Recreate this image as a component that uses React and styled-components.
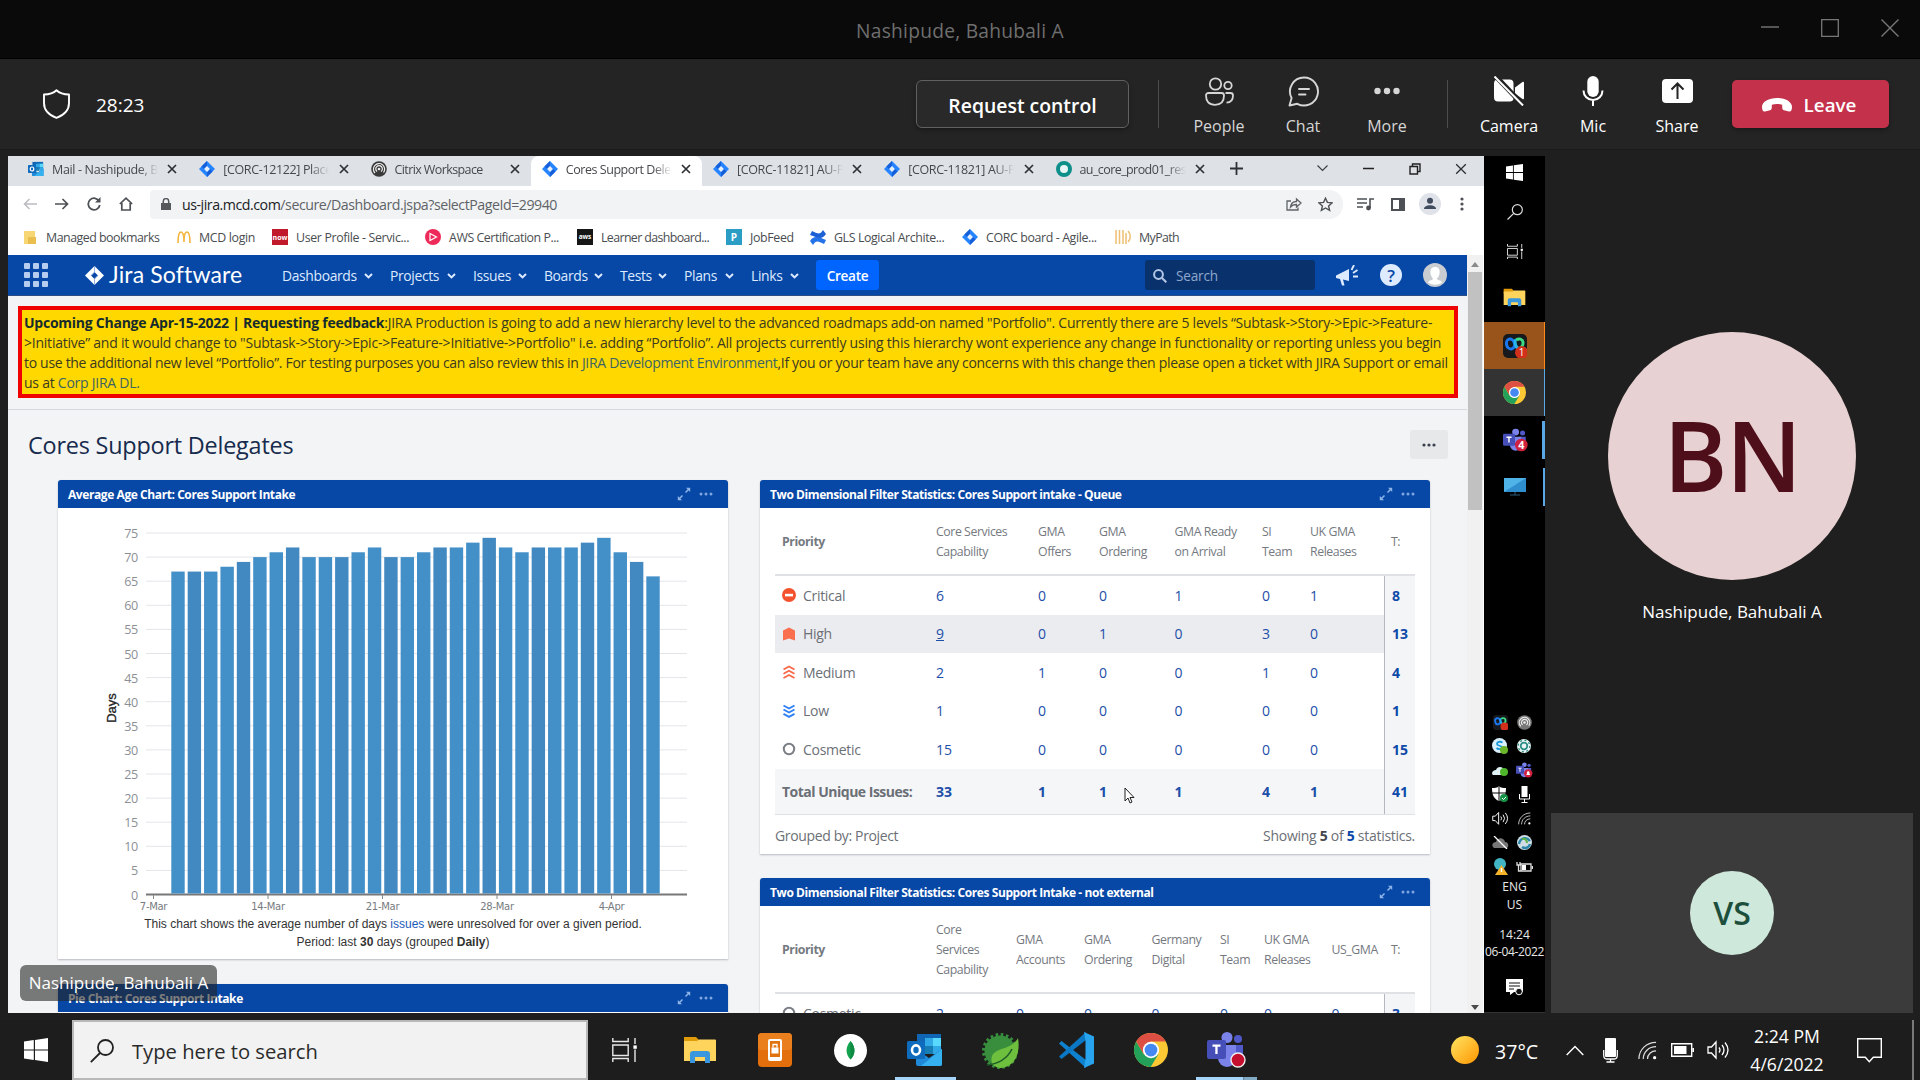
import React from "react";
import styled, { createGlobalStyle, css } from "styled-components";

const Global = createGlobalStyle`
  * { box-sizing: border-box; }
  html, body { margin: 0; padding: 0; background: #1f1f1f; }
  body { width: 1920px; height: 1080px; overflow: hidden; font-family: "Open Sans", "Noto Sans", sans-serif; }
  svg { display: block; flex: none; }
`;

const Screen = styled.div`
  width: 1920px; height: 1080px; display: flex; flex-direction: column; overflow: hidden; white-space: nowrap;
`;
const T = styled.span`
  display: block; white-space: nowrap;
  letter-spacing: ${(p) => p.$ls || 0}px;
`;

/* ---------- meeting title bar ---------- */
const TitleBar = styled.div`
  height: 59px; flex: none; background: #0a0a0a; border-bottom: 1px solid #000;
  display: grid; grid-template-columns: 1fr auto 1fr; align-items: center;
  color: #6f6f6f; font-size: 19.2px; padding: 2px 21px 0 21px;
`;
const WinControls = styled.div`
  display: flex; justify-content: flex-end; gap: 42px; padding-bottom: 4px;
`;
const MeetingBar = styled.div`
  height: 91px; flex: none; background: #242424; border-bottom: 1px solid #1b1b1b;
  display: flex; align-items: center; padding: 0 31px 1px 43px; color: #fff;
`;
const Timer = styled.div`
  font-size: 19px; margin-left: 26px; flex: 1; padding-top: 2px;
`;
const RequestButton = styled.div`
  width: 213px; height: 48px; border: 1px solid #616161; border-radius: 6px; background: #292929;
  display: flex; align-items: center; justify-content: center; font-size: 19.4px; font-weight: 600;
  box-shadow: 0 2px 4px rgba(0,0,0,.3); padding-top: 3px;
`;
const Divider = styled.div`
  width: 1px; height: 48px; background: #4d4d4d; margin: 0 ${(p) => p.$r}px 0 ${(p) => p.$l}px;
`;
const Action = styled.div`
  width: 84px; height: 64px; display: flex; flex-direction: column; align-items: center;
  color: ${(p) => (p.$bright ? "#fff" : "#d6d6d6")}; font-size: 16px; justify-content: space-between; line-height: 22px;
  margin-top: 3px;
`;
const IconBox = styled.div`
  height: 36px; display: flex; align-items: center; justify-content: center;
`;
const LeaveButton = styled.div`
  width: 157px; height: 48px; border-radius: 5px; background: #c4314b; display: flex; align-items: center;
  justify-content: center; gap: 12px; font-size: 18.8px; font-weight: 600; margin-left: 13px; box-shadow: 0 2px 4px rgba(0,0,0,.3);
  padding: 3px 3px 0 0;
`;

/* ---------- stage ---------- */
const Stage = styled.div`
  position: relative; height: 870px; flex: none; background: #1f1f1f; padding: 6px 0 7px 8px; display: flex;
`;
const Shared = styled.div`
  width: 1537px; height: 857px; display: flex; overflow: hidden; flex: none;
`;
const Browser = styled.div`
  width: 1476px; height: 857px; background: #fff; display: flex; flex-direction: column; overflow: hidden; color: #3c4043; flex: none;
`;
const TabStrip = styled.div`
  height: 30px; flex: none; background: #dee1e6; display: flex; padding-left: 9px; color: #45494d; font-size: 12.5px;
`;
const Tab = styled.div`
  width: 171.25px; height: 30px; flex: none; display: flex; align-items: center; padding: 0 11px 4px 11px;
  ${(p) => p.$active && css`background: #fff; border-radius: 8px 8px 0 0;`}
  ${(p) => p.$line && css`background: linear-gradient(#909398,#909398) 100% 8px / 1px 17px no-repeat;`}
`;
const TabLabel = styled.div`
  width: 106px; margin-left: 8px; overflow: hidden; flex: none; letter-spacing: ${(p) => p.$ls}px;
  -webkit-mask-image: linear-gradient(90deg, #000 82%, transparent 100%);
`;
const TabTools = styled.div`
  flex: 1; display: flex; align-items: center; padding: 0 17px 5px 14px;
`;
const Spacer = styled.div`
  flex: ${(p) => (p.$w ? "none" : 1)}; width: ${(p) => p.$w || 0}px;
`;
const UrlRow = styled.div`
  height: 33px; flex: none; display: flex; align-items: center; padding: 3px 0 0 6px;
`;
const NavIcon = styled.div`
  width: 32px; display: flex; justify-content: center; color: ${(p) => p.$c || "#4d5156"};
`;
const UrlBox = styled.div`
  width: 1193px; height: 29px; background: #f1f3f4; border-radius: 4px 14px 14px 4px; display: flex; align-items: center;
  font-size: 14.2px; color: #5f6368; padding: 0 10px 0 11px; margin-left: 8px;
  b { font-weight: 400; color: #202124; }
`;
const Bookmarks = styled.div`
  height: 36px; flex: none; display: flex; align-items: center; padding-left: 16px; font-size: 12.4px; color: #4a4d51;
`;
const Bookmark = styled.div`
  width: ${(p) => p.$w}px; flex: none; display: flex; align-items: center; gap: ${(p) => p.$g || 8}px;
`;
const Square = styled.div`
  width: 16px; height: 16px; background: ${(p) => p.$bg}; color: #fff; font-weight: 700; font-size: ${(p) => p.$fs}px;
  display: flex; align-items: center; justify-content: center; line-height: 1; flex: none;
`;

const PageWrap = styled.div`
  flex: 1; display: flex; min-height: 0;
`;
const Page = styled.div`
  width: 1459px; flex: none; background: #f3f4f6; overflow: hidden; display: flex; flex-direction: column;
`;
const ScrollTrack = styled.div`
  width: 17px; background: #f1f1f1; border-right: 1px solid #fff; display: flex; flex-direction: column; align-items: center;
  justify-content: space-between; padding: 7px 0 3px;
`;
const ScrollThumb = styled.div`
  width: 14px; height: 238px; background: #c1c1c1; margin-top: 5px; margin-bottom: auto;
`;
const JiraHeader = styled.div`
  height: 41px; flex: none; background: #0747a6; border-bottom: 1px solid #2a4f86; display: flex; align-items: center; padding-left: 16px; color: #deebff;
  font-size: 13.9px;
`;
const Grid9 = styled.div`
  display: grid; grid-template-columns: repeat(3, 6.4px); gap: 2.6px; width: 61px;
  i { height: 6.4px; background: #b7cdf0; border-radius: 1px; }
`;
const JiraName = styled.div`
  font-family: Lato, sans-serif; font-size: 23px; color: #fff; width: 173px; margin-left: 5px; padding-bottom: 2px; letter-spacing: .15px;
`;
const NavItem = styled.div`
  width: ${(p) => p.$w}px; flex: none; display: flex; align-items: center; letter-spacing: -.36px;
  justify-content: space-between; padding: 1px 17px 0 0;
`;
const CreateButton = styled.div`
  width: 63px; height: 30px; background: #0065ff; border-radius: 3px; color: #fff; font-weight: 600; font-size: 13.6px;
  display: flex; align-items: center; justify-content: center; letter-spacing: -.3px; padding-top: 1px;
`;
const SearchField = styled.div`
  width: 170px; height: 30px; background: #09326c; border-radius: 3px; margin-left: 266px; display: flex; align-items: center;
  gap: 9px; padding: 1px 0 0 8px; color: #8fa7cc; font-size: 13.6px;
`;
const BannerArea = styled.div`
  height: 114px; flex: none; border-bottom: 1px solid #d5d9de; padding: 10px 9px 0 10px;
`;
const Banner = styled.div`
  height: 92px; border: 4px solid #ee0202; background: #ffd800; padding: 3px 0 0 2px; color: #3c3a20; font-size: 14px; line-height: 20px;
  b { color: #172b2d; } a { color: #3c6464; }
`;
const TitleRow = styled.div`
  height: 70px; flex: none; display: flex; align-items: center; justify-content: space-between; padding: 0 19px 1px 20px;
  color: #172b4d; font-size: 23.4px;
`;
const MoreButton = styled.div`
  width: 38px; height: 29px; background: #e6e8ea; border-radius: 3px; display: flex; align-items: center; justify-content: center;
`;
const Columns = styled.div`
  display: grid; grid-template-columns: 670px 670px; gap: 32px; padding-left: 50px;
`;
const Column = styled.div`
  display: flex; flex-direction: column; gap: ${(p) => p.$gap}px;
`;
const Card = styled.div`
  background: #fff; height: ${(p) => p.$h}px; flex: none; box-shadow: 0 1px 2px rgba(30,40,60,.28); border-radius: 3px 3px 0 0;
`;
const CardHead = styled.div`
  height: 28px; background: #0747a6; border-radius: 3px 3px 0 0; color: #fff; font-weight: 700; font-size: 12px;
  display: flex; align-items: center; padding: 0 15px 0 10px; gap: 8px;
`;
const Caption = styled.div`
  font-family: "Liberation Sans", Arial, sans-serif; font-size: 12px; line-height: 18px; text-align: center; color: #333;
  display: flex; flex-direction: column; align-items: center; padding-top: 2px;
  a { color: #1b5bb8; }
`;
const Table = styled.div`
  padding: 0 15px; color: #6b6f76; font-size: 14px;
`;
const HeadRow = styled.div`
  display: grid; grid-template-columns: ${(p) => p.$cols}; height: ${(p) => p.$h}px; align-items: center; padding-top: 2px;
  border-bottom: 2px solid #dfe1e5; font-size: 12.3px; line-height: 20px; color: #75797f; white-space: pre;
  > * { padding-left: 7px; letter-spacing: -.43px; }
`;
const Row = styled.div`
  display: grid; grid-template-columns: ${(p) => p.$cols}; height: ${(p) => p.$h || 38.5}px; align-items: center;
  background: ${(p) => p.$bg || "#fff"}; color: #1d4fa8; font-weight: ${(p) => (p.$bold ? 700 : 400)};
  border-bottom: ${(p) => (p.$rule ? "1px solid #dfe1e5" : "none")};
  > * { padding-left: 7px; }
`;
const Label = styled.div`
  display: flex; align-items: center; gap: 7px; color: #6b6f76; letter-spacing: -.3px;
`;
const TotalCell = styled.div`
  align-self: stretch; display: flex; align-items: center; border-left: 1px solid #b4b8be; background: #f4f5f7; font-weight: 700;
  color: #0f4aa8;
`;
const Foot = styled.div`
  height: 40px; display: flex; align-items: center; justify-content: space-between; letter-spacing: -.36px;
  b { color: #43474d; } a { color: #0747a6; font-weight: 700; }
`;

/* ---------- remote taskbar ---------- */
const RemoteBar = styled.div`
  width: 61px; background: #000; color: #e8e8e8; font-size: 12px; display: flex; flex-direction: column; align-items: center;
  border-bottom: 1px solid #333;
`;
const RemoteCell = styled.div`
  width: 61px; height: ${(p) => p.$h}px; flex: none; display: flex; align-items: center; justify-content: center;
  background: ${(p) => p.$bg || "none"}; border-right: ${(p) => p.$bw || 0}px solid ${(p) => p.$bc || "#5aa9e6"};
  margin-top: ${(p) => p.$mt || 0}px; padding-left: ${(p) => p.$bw || 0}px;
`;
const TrayGrid = styled.div`
  display: grid; grid-template-columns: 24px 24px; grid-auto-rows: 24.1px; place-items: center; margin-top: 204px; margin-left: -5px;
`;
const Line = styled.div`
  height: 17px; line-height: 17px; margin-top: ${(p) => p.$mt || 0}px; letter-spacing: ${(p) => p.$ls || 0}px; font-size: 12px;
`;

/* ---------- participants ---------- */
const People = styled.div`
  margin-left: 6px; width: 362px; height: 857px; display: flex; flex-direction: column; color: #fff;
`;
const TileTop = styled.div`
  height: 657px; display: flex; flex-direction: column; align-items: center; padding-top: 176px; font-size: 17px; gap: 20px;
`;
const TileBottom = styled.div`
  height: 200px; background: #3b3b3b; display: flex; align-items: center; justify-content: center;
`;
const Avatar = styled.div`
  width: ${(p) => p.$d}px; height: ${(p) => p.$d}px; border-radius: 50%; background: ${(p) => p.$bg}; color: ${(p) => p.$c};
  font-size: ${(p) => p.$fs}px; font-weight: 600; display: flex; align-items: center; justify-content: center; flex: none;
  line-height: 1; letter-spacing: ${(p) => p.$ls || 0}px; padding-bottom: ${(p) => p.$pb || 0}px;
`;
const NameTag = styled.div`
  position: absolute; left: 20px; top: 815px; width: 197px; height: 36px; border-radius: 6px; background: rgba(36,36,36,.6);
  color: #fff; font-size: 17px; display: flex; align-items: center; justify-content: center; padding-bottom: 2px;
`;
const Cursor = styled.div`
  position: absolute; left: 1124px; top: 637px;
`;

/* ---------- taskbar ---------- */
const Taskbar = styled.div`
  height: 60px; flex: none; background: #1d1d1d; display: flex; align-items: center; color: #fff;
`;
const StartCell = styled.div`
  width: 72px; display: flex; justify-content: center;
`;
const SearchBox = styled.div`
  width: 516px; height: 60px; background: #f2f2f2; border: 2px solid #b9b9b9; display: flex; align-items: center; gap: 18px;
  padding: 1px 0 0 16px; color: #2b2b2b; font-size: 20.2px; margin-right: -1px; flex: none;
`;
const SearchHint = styled.div`
  padding-top: 1px;
`;
const TaskCell = styled.div`
  width: 75.2px; height: 60px; display: flex; align-items: center; justify-content: center; flex: none;
`;
const TaskStack = styled.div`
  width: 75.2px; height: 60px; flex: none; display: grid; grid-template-rows: 57px 3px; justify-items: center; align-items: center;
  > svg { margin-top: 3px; }
`;
const Underline = styled.div`
  width: 61px; height: 3px; background: ${(p) => (p.$split ? "linear-gradient(90deg,#a5d5f8 77%,#5c7a90 77%,#83aac5 80%)" : "#a5d5f8")};
`;
const Temp = styled.div`
  width: 87px; padding: 3px 0 0 16px; font-size: 19.6px;
`;
const Clock = styled.div`
  width: 80px; text-align: center; font-size: 17.6px; line-height: 28px; display: flex; flex-direction: column; align-items: center;
`;
const ShowDesktop = styled.div`
  width: 2px; height: 60px; background: #7a7a7a; margin-left: 30px;
`;

/* ---------- icons ---------- */
const JiraMark = ({ s = 16, white }) => (
  <svg width={s} height={s} viewBox="0 0 20 20">
    <path d="M10 0 20 10 10 20 0 10Z" fill={white ? "#fff" : "#2684ff"} />
    {!white && <path d="M10 0v6L6.3 10 3 7Z M10 20v-6l3.7-4 3.3 3Z" fill="#1560d8" />}
    <path d="M10 6.4 13.6 10 10 13.6 6.4 10Z" fill={white ? "#0747a6" : "#e8f0fb"} />
    {white && <path d="M10 0v6.4L6.4 10M10 20v-6.4l3.6-3.6" stroke="#8fb0e0" strokeWidth="1" fill="none" />}
  </svg>
);
const Outlook = ({ s = 36 }) => (
  <svg width={s} height={s} viewBox="0 0 36 36">
    <path d="M10 2h24v16H10z" fill="#1066b5" />
    <path d="M18 6h8v8h-8z" fill="#32a9e7" /><path d="M26 6h8v8h-8z" fill="#58d9fd" />
    <path d="M18 14h8v8h-8z" fill="#167eb4" /><path d="M26 14h8v8h-8z" fill="#32a9e7" />
    <path d="M9 17l13 9 13-9v15a2 2 0 0 1-2 2H11a2 2 0 0 1-2-2z" fill="#1e8ad8" />
    <path d="M35 17 14 34h19a2 2 0 0 0 2-2z" fill="#35b1ef" />
    <rect x="0" y="9" width="18" height="18" rx="1.5" fill="#0f6cbd" />
    <ellipse cx="9" cy="18" rx="4" ry="4.6" fill="none" stroke="#fff" strokeWidth="2.6" />
  </svg>
);
const Chrome = ({ s = 34 }) => (
  <svg width={s} height={s} viewBox="0 0 48 48">
    <circle cx="24" cy="24" r="24" fill="#fcc934" />
    <path d="M3.2 12 13.800 30 34.400 30 23.600 48A24 24 0 0 1 3.200 12Z" fill="#23a15b" />
    <path d="M3.2 12A24 24 0 0 1 44.8 12H24L13.8 19v11Z" fill="#de4f43" />
    <circle cx="24" cy="24" r="11.5" fill="#fff" /><circle cx="24" cy="24" r="9" fill="#4688f1" />
  </svg>
);
const Teams = ({ s = 38, badge }) => (
  <svg width={s} height={s} viewBox="0 0 38 38" overflow="visible">
    <circle cx="20" cy="6.5" r="5.5" fill="#7b83eb" /><circle cx="31" cy="8" r="4" fill="#5059c9" />
    <path d="M25 14h11v11a6 6 0 0 1-11 3z" fill="#5059c9" />
    <path d="M11 14h18v13a9 9 0 0 1-18 0z" fill="#7b83eb" />
    <rect x="0" y="9" width="19" height="19" rx="2" fill="#464eb8" />
    <path d="M5.5 13.5h8v2.2H10.6V23H8.3v-7.3H5.5z" fill="#fff" />
    {badge === "dot" && <circle cx="31" cy="29" r="7" fill="#c50f2f" stroke="#f0f0f0" strokeWidth="1.4" />}
    {badge && badge !== "dot" && <circle cx="29" cy="27" r="10" fill="#d0213f" />}
    {badge && badge !== "dot" && badge !== "bell" && (
      <text x="29" y="33" fontSize="17" fontWeight="700" fill="#fff" textAnchor="middle">{badge}</text>
    )}
    {badge === "bell" && <path d="M24 31h10l-2-3v-3a3 3 0 0 0-6 0v3z" fill="#fff" />}
  </svg>
);
const Folder = ({ s = 34 }) => (
  <svg width={s} height={s * 0.8} viewBox="0 0 34 27">
    <path d="M1 1h12l3 3v4H1z" fill="#e09b0a" />
    <path d="M1 5h13l2-1.5h16a1 1 0 0 1 1 1V25H1z" fill="#ffd45c" />
    <path d="M7 27v-9a3 3 0 0 1 3-3h14a3 3 0 0 1 3 3v9h-5v-6h-10v6z" fill="#3a96dd" />
  </svg>
);
const WinLogo = ({ s = 24 }) => (
  <svg width={s} height={s} viewBox="0 0 24 24" fill="#fff">
    <path d="M0 3.4 9.8 2v9.4H0zM11 1.9 24 0v11.4H11zM0 12.6h9.8V22L0 20.6zM11 12.6h13V24l-13-1.9z" />
  </svg>
);
const Magnifier = ({ s = 24, c = "#222", w = 1.8 }) => (
  <svg width={s} height={s} viewBox="0 0 24 24" fill="none" stroke={c} strokeWidth={w}>
    <circle cx="15.5" cy="8.5" r="7.5" /><path d="M10 14 .8 23.2" />
  </svg>
);
const TaskView = ({ s = 25 }) => (
  <svg width={s} height={s * 0.96} viewBox="0 0 25 24" fill="none" stroke="#e8e8e8" strokeWidth="1.4">
    <path d="M.8 0v3.5h15.4V0M.8 7h15.4v10.5H.8zM.8 24v-3.5h15.4V24M23 0v6M23 11.5V24" />
    <path d="M21.4 7.4h3.4v3.4h-3.4z" fill="#fff" stroke="none" />
  </svg>
);
const Close = ({ s = 10, c = "#2d3034", w = 1.7 }) => (
  <svg width={s} height={s} viewBox="0 0 10 10" stroke={c} strokeWidth={w}><path d="M1 1l8 8M9 1 1 9" /></svg>
);
const Chev = () => (
  <svg width="9" height="6" viewBox="0 0 9 6" fill="none" stroke="#deebff" strokeWidth="2"><path d="M1 1l3.5 3.4L8 1" /></svg>
);
const Dots = ({ c = "#7fa6e0", r = 1.5 }) => (
  <svg width="14" height="4" viewBox="0 0 14 4" fill={c}><circle cx="2" cy="2" r={r} /><circle cx="7" cy="2" r={r} /><circle cx="12" cy="2" r={r} /></svg>
);
const Expand = () => (
  <svg width="14" height="14" viewBox="0 0 14 14" stroke="#8db4e8" strokeWidth="1.5" fill="#8db4e8">
    <path d="M8.5 5.5 12 2M5.5 8.5 2 12" /><path d="M9 .8h4.2V5zM.8 9v4.2H5z" stroke="none" />
  </svg>
);
const Wifi = ({ s = 20 }) => (
  <svg width={s} height={s} viewBox="0 0 20 20" fill="none" stroke="#ddd" strokeWidth="1.3">
    <path d="M1 19C1 9 9 1.5 19 1.5M5.5 19C5.5 11.500 11.500 6 19 6M10 19c0-5 4-8.500 9-8.500" /><circle cx="17.500" cy="17.500" r="1.700" fill="#fff" stroke="none" />
  </svg>
);
const Speaker = ({ s = 23 }) => (
  <svg width={s} height={s * 0.87} viewBox="0 0 23 20" fill="none" stroke="#fff" strokeWidth="1.3">
    <path d="M1 7h3.500L9 2v16l-4.500-5H1zM12 7.500q2 2.500 0 5M15 5q4 5 0 10M18 2.500q6 7.500 0 15" />
  </svg>
);
const Citrix = ({ s = 16, c = "#3a3a3a" }) => (
  <svg width={s} height={s} viewBox="0 0 16 16" fill="none">
    <circle cx="8" cy="8" r="7.800" fill={c} />
    <path d="M4 12A5.600 5.600 0 1 1 12.500 11.500M6 10.500A3.300 3.300 0 1 1 10 10.600" stroke="#eee" strokeWidth="1.200" />
    <circle cx="8" cy="8" r="1.300" fill="#eee" />
  </svg>
);
const Webex = ({ s = 24, badge }) => (
  <svg width={s} height={s} viewBox="0 0 24 24">
    <rect width="24" height="24" rx="5" fill="#17191c" />
    <path d="M13 6c3-2 6.500-1 7 2 .3 3-1 5-3 5.500" stroke="#3ddc84" strokeWidth="3" fill="none" />
    <ellipse cx="7.500" cy="10" rx="4" ry="5" transform="rotate(-15 7.500 10)" fill="none" stroke="#1b78f0" strokeWidth="3" />
    <path d="M12 6.500c0 5 1.500 8 4.500 8" stroke="#27b8ea" strokeWidth="3" fill="none" strokeLinecap="round" />
    <circle cx="18.500" cy="18.500" r="6.500" fill="#d3301c" />
    {badge && <text x="18.500" y="22" fontSize="10" fill="#fff" textAnchor="middle">{badge}</text>}
  </svg>
);

/* ---------- data ---------- */
const bars = [67, 67, 67, 68, 69, 70, 71, 72, 70, 70, 70, 71, 72, 70, 70, 71, 72, 72, 73, 74, 72, 71, 72, 72, 72, 73, 74, 71, 69, 66];
const ticks = Array.from({ length: 16 }, (_, i) => i * 5);
const dates = ["7-Mar", "14-Mar", "21-Mar", "28-Mar", "4-Apr"];
const yOf = (v) => 386.5 - v * 4.82;

const cols1 = "154px 102px 61px 75.500px 87.500px 48px 1fr 31px";
const cols2 = "154px 80px 68px 67.500px 68.500px 44px 67.500px 1fr 31px";
const rows1 = [
  ["Critical", [6, 0, 0, 1, 0, 1], 8],
  ["High", [9, 0, 1, 0, 3, 0], 13],
  ["Medium", [2, 1, 0, 0, 1, 0], 4],
  ["Low", [1, 0, 0, 0, 0, 0], 1],
  ["Cosmetic", [15, 0, 0, 0, 0, 0], 15],
];

const PriorityIcon = ({ name }) => (
  <svg width="14" height="14" viewBox="0 0 14 14" fill="none">
    {name === "Critical" && (<><circle cx="7" cy="7" r="7" fill="#f4522e" /><path d="M3 5.800h8v2.600H3z" fill="#fff" /></>)}
    {name === "High" && <path d="M1 3.500 7 .5l6 3V13.500L7 11.500l-6 2z" fill="#fa6f4d" />}
    {name === "Medium" && <path d="M1.500 4.500 7 1.500l5.500 3M1.500 8.700 7 5.700l5.500 3M1.500 13 7 10l5.500 3" stroke="#f8694a" strokeWidth="1.800" />}
    {name === "Low" && <path d="M1.500 1.500 7 4.500l5.500-3M1.500 5.500 7 8.500l5.500-3M1.500 9.800 7 12.800l5.500-3" stroke="#2f80f5" strokeWidth="1.900" />}
    {name === "Cosmetic" && <circle cx="7" cy="7" r="5.200" stroke="#7a7e85" strokeWidth="2" />}
  </svg>
);

const Head = ({ children }) => (
  <CardHead><T $ls={-0.42}>{children}</T><Spacer /><Expand /><Dots /></CardHead>
);

function Chart() {
  return (
    <svg width="670" height="405" viewBox="0 0 670 405">
      {ticks.map((t) => (
        <g key={t}>
          <path d={`M88 ${yOf(t)}H629`} stroke={t ? "#e3e5e9" : "#777"} strokeWidth={t ? 1 : 2} />
          <text x="80" y={yOf(t) + 5} fontSize="12.600" letterSpacing="-.3" textAnchor="end" fill="#8c9096">{t}</text>
        </g>
      ))}
      {bars.map((v, i) => (
        <rect key={i} x={113.3 + i * 16.38} y={yOf(v)} width="13.400" height={v * 4.82 - 1} fill={i % 3 === 1 ? "#4389c1" : "#438fc8"} />
      ))}
      {dates.map((d, i) => (
        <g key={d}>
          <path d={`M${95.500 + i * 114.500} 387v4`} stroke="#888" />
          <text x={95.500 + i * 114.500} y="402" fontSize="10" textAnchor="middle" fontFamily="DejaVu Sans" letterSpacing="-.3" fill="#777b80">{d}</text>
        </g>
      ))}
      <text transform="translate(57.500 200) rotate(-90)" textAnchor="middle" fontSize="13" fontFamily="Liberation Sans" fill="#222" stroke="#222" strokeWidth=".3">Days</text>
    </svg>
  );
}

function BrowserWindow() {
  const tabs = [
    [<Outlook s={16} />, "Mail - Nashipude, B", 1, 0, -0.35],
    [<JiraMark />, "[CORC-12122] Place", 1, 0, -0.36],
    [<Citrix />, "Citrix Workspace", 0, 0, -0.6],
    [<JiraMark />, "Cores Support Dele", 0, 1, -0.45],
    [<JiraMark />, "[CORC-11821] AU-P", 1, 0, -0.36],
    [<JiraMark />, "[CORC-11821] AU-P", 1, 0, -0.36],
    [<svg width="16" height="16"><circle cx="8" cy="8" r="6" fill="#e8f6f5" stroke="#0f8f8a" strokeWidth="4" /></svg>, "au_core_prod01_res", 1, 0, -0.58],
  ];
  const nav = [["Dashboards", 108], ["Projects", 83], ["Issues", 71], ["Boards", 76], ["Tests", 64], ["Plans", 67], ["Links", 65]];
  return (
    <Browser>
      <TabStrip>
        {tabs.map(([icon, label, line, active, ls], i) => (
          <Tab key={i} $line={line} $active={active}>
            {icon}<TabLabel $ls={ls}>{label}</TabLabel><Spacer /><Close />
          </Tab>
        ))}
        <TabTools>
          <svg width="13" height="13" stroke="#2d3034" strokeWidth="1.800"><path d="M6.500 0v13M0 6.500h13" /></svg>
          <Spacer />
          <svg width="11" height="7" fill="none" stroke="#3c4043" strokeWidth="1.200"><path d="M.5.5l5 5 5-5" /></svg><Spacer $w={35} />
          <svg width="11" height="3"><path d="M0 1.500h11" stroke="#222" strokeWidth="1.500" /></svg><Spacer $w={35} />
          <svg width="12" height="12" fill="none" stroke="#222" strokeWidth="1.400"><path d="M1 3.500h7.500V11H1zM3.500 3.500V1H11v7.500H8.500" /></svg><Spacer $w={34} />
          <Close s={12} w={1.1} />
        </TabTools>
      </TabStrip>
      <UrlRow>
        <NavIcon $c="#b9bcc0"><svg width="14" height="12" fill="none" stroke="currentColor" strokeWidth="1.500"><path d="M14 6H1.500M6.500 1 1.500 6l5 5" /></svg></NavIcon>
        <NavIcon><svg width="14" height="12" fill="none" stroke="currentColor" strokeWidth="1.700"><path d="M0 6h12.500M7.500 1l5 5-5 5" /></svg></NavIcon>
        <NavIcon><svg width="14" height="14" fill="none" stroke="currentColor" strokeWidth="1.800"><path d="M12.300 4.500A5.800 5.800 0 1 0 12.800 8" /><path d="M13.500 0v5.500H8z" fill="currentColor" stroke="none" /></svg></NavIcon>
        <NavIcon><svg width="14" height="14" fill="none" stroke="currentColor" strokeWidth="1.700"><path d="M.8 7 7 1.200 13.200 7M2.800 6v7h8.400V6" /></svg></NavIcon>
        <UrlBox>
          <svg width="10" height="12" fill="#55595e"><path d="M0 5h10v7H0z" /><path d="M2.300 5V3.300a2.700 2.700 0 0 1 5.400 0V5" fill="none" stroke="#55595e" strokeWidth="1.500" /></svg>
          <Spacer $w={11} />
          <T $ls={-0.47}><b>us-jira.mcd.com</b>/secure/Dashboard.jspa?selectPageId=29940</T>
          <Spacer />
          <svg width="16" height="14" fill="none" stroke="#5f6368" strokeWidth="1.300"><path d="M5 4H1v9h11v-2.500M4.500 10c.5-4 3-5.500 6-5.500V2l4.500 4-4.500 4V7.500c-2.500 0-4.500.5-6 2.500z" /></svg>
          <Spacer $w={16} />
          <svg width="15" height="15" viewBox="0 0 15 15" fill="none" stroke="#4d5156" strokeWidth="1.400"><path d="M7.500 1.200l1.900 4.200 4.600.5-3.400 3 1 4.500-4.100-2.400-4.100 2.400 1-4.500-3.400-3 4.600-.5z" /></svg>
        </UrlBox>
        <Spacer $w={14} />
        <svg width="17" height="14" fill="none" stroke="#4d5156" strokeWidth="1.600"><path d="M0 2h10M0 6h10M0 10h6M13 11V2h4" /><circle cx="11.500" cy="11" r="1.600" fill="#4d5156" /></svg>
        <Spacer $w={17} />
        <svg width="14" height="13" fill="none" stroke="#4d5156" strokeWidth="2"><path d="M1 1h12v11H1z" /><path d="M9 1h4v11H9z" fill="#4d5156" /></svg>
        <Spacer $w={14} />
        <svg width="22" height="22"><circle cx="11" cy="11" r="11" fill="#dfe2e8" /><circle cx="11" cy="7.800" r="3" fill="#414b5e" /><path d="M5 16c0-5 12-5 12 0z" fill="#414b5e" /></svg>
        <Spacer $w={19} />
        <svg width="4" height="14" fill="#4d5156"><circle cx="2" cy="2" r="1.600" /><circle cx="2" cy="7" r="1.600" /><circle cx="2" cy="12" r="1.600" /></svg>
      </UrlRow>
      <Bookmarks>
        <Bookmark $w={153} $g={9}><svg width="13" height="15"><path d="M0 1h11v13H0z" fill="#f7d774" /><path d="M4 7h8v7H4z" fill="#e9bd4e" /></svg><T $ls={-0.5}>Managed bookmarks</T></Bookmark>
        <Bookmark $w={95} $g={8}><svg width="14" height="12" fill="none" stroke="#f3b53c" strokeWidth="1.600"><path d="M1 12C1 5 2 1 4 1s3 4 3 10c0-6 1-10 3-10s3 4 3 11" /></svg><T $ls={-0.35}>MCD login</T></Bookmark>
        <Bookmark $w={153}><Square $bg="#c0192c" $fs={7}>now</Square><T $ls={-0.36}>User Profile - Servic...</T></Bookmark>
        <Bookmark $w={152}><svg width="16" height="16"><circle cx="8" cy="8" r="8" fill="#ee2a5a" /><path d="M5 4.500 11.500 8 5 11.500z" fill="none" stroke="#fff" strokeWidth="1.200" /></svg><T $ls={-0.45}>AWS Certification P...</T></Bookmark>
        <Bookmark $w={149}><Square $bg="#161616" $fs={6.500}>aws</Square><T $ls={-0.62}>Learner dashboard...</T></Bookmark>
        <Bookmark $w={84}><Square $bg="#2b9cc4" $fs={10}>P</Square><T $ls={-0.35}>JobFeed</T></Bookmark>
        <Bookmark $w={152}><svg width="16" height="15" fill="#2573e8"><path d="M0 11c4-6 8-4 16-1l-2 4C8 11 6 10 3 15z" /><path d="M16 4C12 10 8 8 0 5l2-4c6 3 8 4 11-1z" fill="#1c60d6" /></svg><T $ls={-0.4}>GLS Logical Archite...</T></Bookmark>
        <Bookmark $w={153}><JiraMark /><T $ls={-0.38}>CORC board - Agile...</T></Bookmark>
        <Bookmark $w={100}><svg width="16" height="14" fill="none" stroke="#eebf72" strokeWidth="1.500"><path d="M1 0v14M4.500 0v14M8 0v14M11 3v11M13 12c3-3 3-8 0-11" /></svg><T $ls={-0.6}>MyPath</T></Bookmark>
      </Bookmarks>
      <PageWrap>
        <Page>
          <JiraHeader>
            <Grid9>{Array.from({ length: 9 }, (_, i) => <i key={i} />)}</Grid9>
            <JiraMark s={19} white />
            <JiraName>Jira Software</JiraName>
            {nav.map(([n, w]) => (
              <NavItem key={n} $w={w}><span>{n}</span><Chev /></NavItem>
            ))}
            <CreateButton>Create</CreateButton>
            <SearchField><svg width="14" height="14" fill="none" stroke="#b3c6e6" strokeWidth="2"><circle cx="5.500" cy="5.500" r="4.400" /><path d="M9 9l4.300 4.300" /></svg><T $ls={-0.2}>Search</T></SearchField>
            <Spacer $w={21} />
            <svg width="22" height="21" fill="#deebff"><path d="M0 10.500 13 4v12L7 14.500l1.500 6H6L4 14l-4-1z" /><path d="M15.500 5 18 0M17 8l4.500-3M17 11.500h5" stroke="#deebff" strokeWidth="1.800" /></svg>
            <Spacer $w={22} />
            <Avatar $d={22} $bg="#deebff" $c="#0747a6" $fs={17}>?</Avatar>
            <Spacer $w={21} />
            <svg width="24" height="24"><circle cx="12" cy="12" r="12" fill="#c9ccd1" /><path d="M12 4c4 0 5 3 4.500 6.500S14 15 14 16s4 1 5 3.500a12 12 0 0 1-14 0C6 17 10 17 10 16s-2-2-2.500-5.500S8 4 12 4z" fill="#fff" /></svg>
          </JiraHeader>
          <BannerArea>
            <Banner>
              <T $ls={-0.25}><b>Upcoming Change Apr-15-2022 | Requesting feedback</b>:JIRA Production is going to add a new hierarchy level to the advanced roadmaps add-on named "Portfolio". Currently there are 5 levels “Subtask-&gt;Story-&gt;Epic-&gt;Feature-</T>
              <T $ls={-0.23}>&gt;Initiative” and it would change to "Subtask-&gt;Story-&gt;Epic-&gt;Feature-&gt;Initiative-&gt;Portfolio" i.e. adding “Portfolio”. All projects currently using this hierarchy wont experience any change in functionality or reporting unless you begin</T>
              <T $ls={-0.31}>to use the additional new level “Portfolio”. For testing purposes you can also review this in <a>JIRA Development Environment</a>,If you or your team have any concerns with this change then please open a ticket with JIRA Support or email</T>
              <T $ls={-0.25}>us at <a>Corp JIRA DL.</a></T>
            </Banner>
          </BannerArea>
          <TitleRow><T $ls={-0.2}>Cores Support Delegates</T><MoreButton><Dots c="#3a4250" r={1.6} /></MoreButton></TitleRow>
          <Columns>
            <Column $gap={25}>
              <Card $h={479}>
                <Head>Average Age Chart: Cores Support Intake</Head>
                <Chart />
                <Caption>
                  <T>This chart shows the average number of days <a>issues</a> were unresolved for over a given period.</T>
                  <T>Period: last <b>30</b> days (grouped <b>Daily</b>)</T>
                </Caption>
              </Card>
              <Card $h={120}><Head>Pie Chart: Cores Support Intake</Head></Card>
            </Column>
            <Column $gap={24}>
              <Card $h={374}>
                <Head>Two Dimensional Filter Statistics: Cores Support intake - Queue</Head>
                <Table>
                  <HeadRow $cols={cols1} $h={68}>
                    <b>Priority</b><span>{"Core Services\nCapability"}</span><span>{"GMA\nOffers"}</span><span>{"GMA\nOrdering"}</span><span>{"GMA Ready\non Arrival"}</span><span>{"SI\nTeam"}</span><span>{"UK GMA\nReleases"}</span><span>T:</span>
                  </HeadRow>
                  {rows1.map(([n, vals, t]) => (
                    <Row key={n} $cols={cols1} $bg={n === "High" ? "#ebecf0" : "#fff"}>
                      <Label><PriorityIcon name={n} />{n}</Label>
                      {vals.map((v, i) => <span key={i}>{v === 9 ? <u>9</u> : v}</span>)}
                      <TotalCell>{t}</TotalCell>
                    </Row>
                  ))}
                  <Row $cols={cols1} $h={46.5} $bg="#f5f6f8" $bold $rule>
                    <Label><T $ls={-0.5}>Total Unique Issues:</T></Label>
                    {[33, 1, 1, 1, 4, 1].map((v, i) => <span key={i}>{v}</span>)}
                    <TotalCell>41</TotalCell>
                  </Row>
                  <Foot><span>Grouped by: Project</span><T $ls={-0.28}>Showing <b>5</b> of <a>5</a> statistics.</T></Foot>
                </Table>
              </Card>
              <Card $h={200}>
                <Head>Two Dimensional Filter Statistics: Cores Support Intake - not external</Head>
                <Table>
                  <HeadRow $cols={cols2} $h={88}>
                    <b>Priority</b><span>{"Core\nServices\nCapability"}</span><span>{"GMA\nAccounts"}</span><span>{"GMA\nOrdering"}</span><span>{"Germany\nDigital"}</span><span>{"SI\nTeam"}</span><span>{"UK GMA\nReleases"}</span><span>US_GMA</span><span>T:</span>
                  </HeadRow>
                  <Row $cols={cols2}>
                    <Label><PriorityIcon name="Cosmetic" />Cosmetic</Label>
                    {[2, 0, 0, 0, 0, 0, 0].map((v, i) => <span key={i}>{v}</span>)}
                    <TotalCell>3</TotalCell>
                  </Row>
                </Table>
              </Card>
            </Column>
          </Columns>
        </Page>
        <ScrollTrack>
          <svg width="8" height="5"><path d="M0 5 4 0l4 5z" fill="#8a8a8a" /></svg>
          <ScrollThumb />
          <svg width="8" height="5"><path d="M0 0h8L4 5z" fill="#4a4a4a" /></svg>
        </ScrollTrack>
      </PageWrap>
    </Browser>
  );
}

function RemoteTaskbar() {
  return (
    <RemoteBar>
      <RemoteCell $h={32}><WinLogo s={17} /></RemoteCell>
      <RemoteCell $h={48}><Magnifier s={16} c="#ddd" w={1.8} /></RemoteCell>
      <RemoteCell $h={31}><TaskView s={16} /></RemoteCell>
      <RemoteCell $h={49} $mt={6}><Folder s={23} /></RemoteCell>
      <RemoteCell $h={47} $bg="#99541b" $bw={1} $bc="#ff8c1a"><Webex badge="1" /></RemoteCell>
      <RemoteCell $h={47} $bg="#333" $bw={1}><Chrome s={23} /></RemoteCell>
      <RemoteCell $h={38} $mt={5} $bw={3}><Teams s={24} badge="4" /></RemoteCell>
      <RemoteCell $h={38} $mt={9} $bw={2}><svg width="22" height="18"><path d="M0 0h22v14H0z" fill="#4fb3e8" /><path d="M0 14 22 0v14z" fill="#2f8fce" /><path d="M6 17h10M11 14v3" stroke="#2b5d7c" /></svg></RemoteCell>
      <TrayGrid>
        <Webex s={15} />
        <Citrix s={15} c="#777" />
        <svg width="16" height="16"><circle cx="7.500" cy="7.500" r="7.500" fill="#d8eefb" /><path d="M10.500 4.500C8 3 5 4 5 6s5 1.500 5 3.500-4 2-5.500.5" fill="none" stroke="#1595d8" strokeWidth="1.800" /><circle cx="12" cy="12" r="4" fill="#6bb52b" /></svg>
        <svg width="14" height="14"><circle cx="7" cy="7" r="7" fill="#e9f4f3" /><circle cx="7" cy="7" r="3.300" fill="none" stroke="#2c8d86" strokeWidth="1.800" /><circle cx="7" cy="7" r="5.800" fill="none" stroke="#2c8d86" strokeWidth="1.200" strokeDasharray="2 2.500" /></svg>
        <svg width="16" height="11"><path d="M0 9c0-3 2-4 4-4 1-4 7-4 8 0 3 0 3 4 1 5H1z" fill="#dff1f7" /><circle cx="12" cy="7" r="4" fill="#4fb52b" /></svg>
        <Teams s={16} badge="bell" />
        <svg width="16" height="16"><path d="M7 0c2 2 4 2 7 2 0 7-2 11-7 13C2 13 0 9 0 2c3 0 5 0 7-2z" fill="#fff" /><path d="M7 0v15M0 7h14" stroke="#000" /><circle cx="12" cy="12" r="4" fill="#159447" /><path d="M10 12l1.500 1.500L14 11" stroke="#fff" fill="none" /></svg>
        <svg width="11" height="17"><rect x="2.500" width="6" height="11" fill="#fff" /><path d="M.5 8v5h10V8M5.500 13v3M2.500 16.500h6" stroke="#fff" fill="none" /></svg>
        <Speaker s={17} />
        <Wifi s={13} />
        <svg width="17" height="13"><path d="M1 11c-2-3 1-5 3-5 1-5 8-5 9 0 4 0 4 5 2 6H2z" fill="#777" /><path d="M2 0l13 13" stroke="#fff" strokeWidth="1.300" /></svg>
        <svg width="15" height="15"><circle cx="7.500" cy="7.500" r="7.500" fill="#cfdce3" /><path d="M2 9c1-6 7-8 11-3M13 9c-1 4-5 5-8 3" stroke="#2a86a8" strokeWidth="2.400" fill="none" /><path d="M5 4c3-1 5 1 5 4" stroke="#5cae45" strokeWidth="2" fill="none" /></svg>
        <svg width="15" height="17"><circle cx="7" cy="6" r="6" fill="#42b5c4" /><path d="M8.500 7 15 17H2z" fill="#f5b42a" /><path d="M8.500 10v4" stroke="#fff" strokeWidth="1.400" /></svg>
        <svg width="17" height="12" fill="none" stroke="#ddd" strokeWidth="1.300"><path d="M5 3h10v7H5zM16.500 5v3M1 1v3h3V1M2.500 4v6H5" /><path d="M6 4h4v5H6z" fill="#fff" stroke="none" /></svg>
      </TrayGrid>
      <Line $mt={-1}>ENG</Line>
      <Line $mt={1}>US</Line>
      <Line $mt={13}>14:24</Line>
      <Line $ls={-0.38}>06-04-2022</Line>
      <RemoteCell $h={38} $mt={9}><svg width="17" height="17"><path d="M0 0h17v13H8l-4 3v-3H0z" fill="#fff" /><path d="M3 4h11M3 7h11M3 10h5" stroke="#111" /><circle cx="13" cy="12.500" r="3.300" fill="#111" stroke="#fff" /></svg></RemoteCell>
    </RemoteBar>
  );
}

export default function App() {
  return (
    <>
      <Global />
      <Screen>
        <TitleBar>
          <span />
          <T $ls={0.25}>Nashipude, Bahubali A</T>
          <WinControls>
            <svg width="18" height="20"><path d="M0 9h18" stroke="#777" strokeWidth="1.400" /></svg>
            <svg width="18" height="20"><path d="M.7 1.700h16.600v16.600H.7z" stroke="#777" strokeWidth="1.300" fill="none" /></svg>
            <svg width="18" height="20"><path d="M.5 1.500l17 17M17.500 1.500l-17 17" stroke="#777" strokeWidth="1.400" /></svg>
          </WinControls>
        </TitleBar>
        <MeetingBar>
          <svg width="27" height="30" viewBox="0 0 27 30" fill="none" stroke="#fff" strokeWidth="1.900" strokeLinejoin="round"><path d="M13.500 1.200C16.500 4 20.500 5.300 26 5.500v8.500c0 7-4.500 12-12.500 14.800C5.500 26 1 21 1 14V5.500c5.500-.2 9.500-1.500 12.500-4.300z" /></svg>
          <Timer>28:23</Timer>
          <RequestButton>Request control</RequestButton>
          <Divider $l={29} $r={18} />
          <Action>
            <IconBox><svg width="29" height="29" viewBox="0 0 29 29" fill="none" stroke="#d6d6d6" strokeWidth="1.800"><circle cx="10.500" cy="7" r="5.700" /><circle cx="23" cy="8.500" r="3.700" /><path d="M3.500 16h13a2.500 2.500 0 0 1 2.500 2.500c0 6-3 9.300-9 9.300s-9-3.300-9-9.300A2.500 2.500 0 0 1 3.500 16zM20.500 16h5a2.500 2.500 0 0 1 2.500 2.500c0 4.500-2 7-6.500 7.200" /></svg></IconBox>
            <T>People</T>
          </Action>
          <Action>
            <IconBox><svg width="31" height="31" viewBox="0 0 31 31" fill="none" stroke="#d6d6d6" strokeWidth="1.900" strokeLinejoin="round" strokeLinecap="round"><path d="M16 1.500A14 14 0 1 1 9.300 27.800L1.500 29.500 3.600 22A14 14 0 0 1 16 1.500zM11 13h10M11 18.500h6.500" /></svg></IconBox>
            <T>Chat</T>
          </Action>
          <Action>
            <IconBox><svg width="26" height="8" fill="#d6d6d6"><circle cx="3.500" cy="4" r="3.200" /><circle cx="13" cy="4" r="3.200" /><circle cx="22.500" cy="4" r="3.200" /></svg></IconBox>
            <T>More</T>
          </Action>
          <Divider $l={18} $r={19} />
          <Action $bright>
            <IconBox><svg width="32" height="30" viewBox="0 0 32 30"><path d="M5 3.500h11.500a4 4 0 0 1 4 4V9l.2 12.500a4 4 0 0 1-4 4H5a4 4 0 0 1-4-4v-14a4 4 0 0 1 4-4z" fill="#fff" /><path d="M22 11.500l7.500-5.500c.8-.5 1.500-.2 1.500.7v15.600c0 .9-.7 1.200-1.500.7L22 17.500z" fill="#fff" /><path d="M2.500 0 31 30" stroke="#242424" strokeWidth="5" /><path d="M1.500.5 30 29.500" stroke="#fff" strokeWidth="2" /></svg></IconBox>
            <T>Camera</T>
          </Action>
          <Action $bright>
            <IconBox><svg width="22" height="30" viewBox="0 0 22 30"><rect x="5.300" y="0" width="11.400" height="21" rx="5.700" fill="#fff" /><path d="M1.500 14.500a9.500 9.500 0 0 0 19 0M11 24v6" fill="none" stroke="#fff" strokeWidth="2" /></svg></IconBox>
            <T>Mic</T>
          </Action>
          <Action $bright>
            <IconBox><svg width="31" height="24" viewBox="0 0 31 24"><rect width="31" height="24" rx="4" fill="#fff" /><path d="M15.500 20V5M9.500 10.500l6-6 6 6" fill="none" stroke="#242424" strokeWidth="2" /></svg></IconBox>
            <T>Share</T>
          </Action>
          <LeaveButton>
            <svg width="30" height="14" viewBox="0 0 30 14"><path d="M15 0C7 0 0 3.500 0 9c0 3 1 5 3 4.500l5-1.200c1.200-.3 1.800-1.300 1.800-3V6.800c3-1 7.400-1 10.400 0v2.500c0 1.700.6 2.700 1.800 3l5 1.200c2 .5 3-1.500 3-4.500 0-5.500-7-9-15-9z" fill="#fff" /></svg>
            <T>Leave</T>
          </LeaveButton>
        </MeetingBar>
        <Stage>
          <Shared><BrowserWindow /><RemoteTaskbar /></Shared>
          <People>
            <TileTop>
              <Avatar $d={248} $bg="#e8d1d2" $c="#4e0f1a" $fs={97} $ls={-1.5} $pb={3}>BN</Avatar>
              <T>Nashipude, Bahubali A</T>
            </TileTop>
            <TileBottom><Avatar $d={84} $bg="#cfe8dc" $c="#1c4f3c" $fs={32}>VS</Avatar></TileBottom>
          </People>
          <NameTag>Nashipude, Bahubali A</NameTag>
          <Cursor><svg width="12" height="18"><path d="M1 1v13l3-3 2 5 2-1-2-4.500h4z" fill="#fff" stroke="#222" /></svg></Cursor>
        </Stage>
        <Taskbar>
          <StartCell><WinLogo /></StartCell>
          <SearchBox><Magnifier /><SearchHint>Type here to search</SearchHint></SearchBox>
          <TaskCell><TaskView /></TaskCell>
          <TaskCell><Folder /></TaskCell>
          <TaskCell>
            <svg width="34" height="34"><rect width="34" height="34" rx="4" fill="#e36f0c" /><rect width="34" height="17" rx="4" fill="#ea7f1e" /><rect x="10" y="6" width="14" height="22" rx="2" fill="#fff" /><rect x="12" y="8" width="10" height="16" fill="#e0720f" /><rect x="13.500" y="14.500" width="7" height="6" fill="#fff" /><path d="M15 14.500V11.500h4v3" fill="none" stroke="#fff" strokeWidth="1.300" /></svg>
          </TaskCell>
          <TaskCell>
            <svg width="33" height="33"><circle cx="16.500" cy="16.500" r="16.500" fill="#fff" /><path d="M16.500 7c6 7 4.500 14 0 18.500-4.500-4.500-6-11.500 0-18.500z" fill="#13a34f" /><path d="M16.500 7c6 7 4.500 14 0 18.500z" fill="#0f8a42" /></svg>
          </TaskCell>
          <TaskStack><Outlook /><Underline /></TaskStack>
          <TaskCell>
            <svg width="37" height="37" viewBox="0 0 37 37"><circle cx="18" cy="19" r="15.500" fill="#388e3c" /><circle cx="18" cy="19" r="16.500" fill="none" stroke="#388e3c" strokeWidth="3" strokeDasharray="2.600 2.600" /><path d="M36 6c3 18-5 29-17 30-8 0-11-6-9-12 4-9 20-6 26-18z" fill="#6fbf3f" /><path d="M5 33c10-1 20-6 25-16" stroke="#1f5d27" strokeWidth="1.600" fill="none" /></svg>
          </TaskCell>
          <TaskCell>
            <svg width="36" height="36" viewBox="0 0 36 36"><path d="M1 11.500 3.500 9 28 28v8z" fill="#0f82cf" /><path d="M1 24.500 3.500 27 28 8V0z" fill="#0a78c4" /><path d="M26 0l10 4.500v27L26 36l1.500-9V9z" fill="#28a3ee" /></svg>
          </TaskCell>
          <TaskCell><Chrome /></TaskCell>
          <TaskStack><Teams badge="dot" /><Underline $split /></TaskStack>
          <Spacer />
          <svg width="28" height="28"><defs><linearGradient id="sun" x1="0" y1="0" x2="1" y2="1"><stop offset="0" stopColor="#ffe562" /><stop offset="1" stopColor="#ff9500" /></linearGradient></defs><circle cx="14" cy="14" r="14" fill="url(#sun)" /></svg>
          <Temp>37°C</Temp>
          <svg width="18" height="11" fill="none" stroke="#fff" strokeWidth="1.400"><path d="M.7 10 9 1.500l8.300 8.500" /></svg><Spacer $w={19} />
          <svg width="15" height="25"><rect x="2" width="11" height="19" rx="1" fill="#fff" /><path d="M.7 12v5q0 4 3 4h7.600q3 0 3-4v-5M7.500 21v3M3.500 24h8" fill="none" stroke="#fff" strokeWidth="1.300" /></svg><Spacer $w={20} />
          <Wifi s={19} /><Spacer $w={14} />
          <svg width="23" height="14" fill="none" stroke="#fff" strokeWidth="1.400"><path d="M.7.7h20v12.600H.7zM22.300 5v4" /><path d="M3 3h12.500v8H3z" fill="#fff" stroke="none" /></svg><Spacer $w={13} />
          <Speaker /><Spacer $w={17} />
          <Clock><T>2:24 PM</T><T>4/6/2022</T></Clock>
          <Spacer $w={30} />
          <svg width="25" height="25" fill="none" stroke="#fff" strokeWidth="1.400"><path d="M.7.7h23.600v18.600h-8l-4 4.500-4-4.500H.7z" /></svg>
          <ShowDesktop />
          <Spacer $w={6} />
        </Taskbar>
      </Screen>
    </>
  );
}
